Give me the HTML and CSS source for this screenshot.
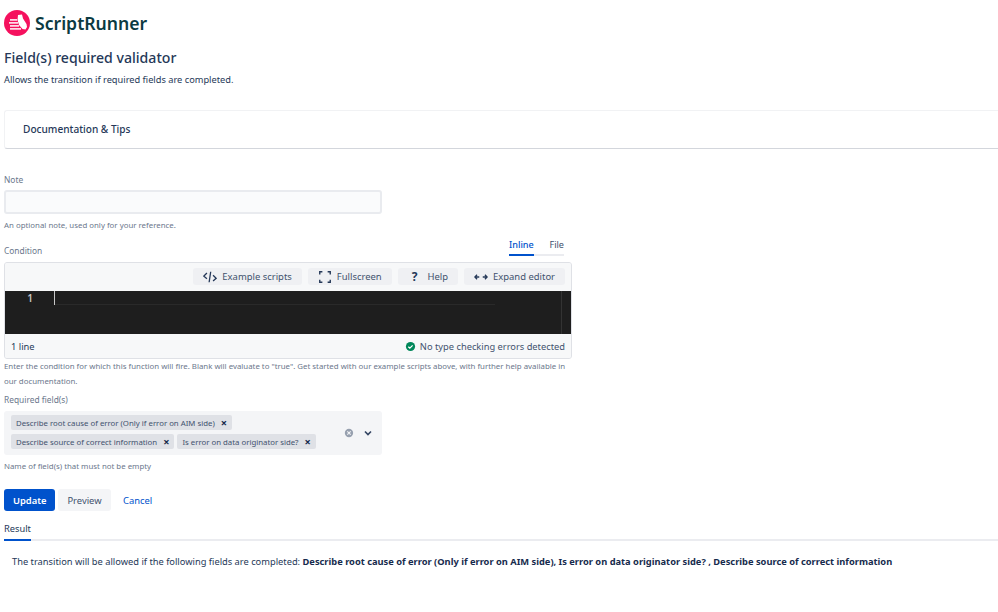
FILE: index.html
```html
<!DOCTYPE html>
<html lang="en">
<head>
<meta charset="utf-8">
<title>Field(s) required validator</title>
<link rel="stylesheet" href="styles.css">
</head>
<body>
<header class="brand">
  <svg class="brand-logo" viewBox="0 0 26 26" aria-hidden="true">
    <circle cx="13" cy="13" r="13" fill="#f5115e"/>
    <path d="M14 5l4-.5 1 4 3.500 5.500.5 3-1.500 2.500-3-.5-3.500-4-1.500-5z" fill="#fff"/>
    <path d="M6 9h7v1.800H6zM5 12h9v1.800H5zM6 15h9v1.800H6zM6 18h11v1.800H6z" fill="#fff" opacity=".85"/>
  </svg>
  <span class="brand-name">ScriptRunner</span>
</header>
<h1 class="title">Field(s) required validator</h1>
<p class="subtitle">Allows the transition if required fields are completed.</p>

<section class="doc-card">Documentation &amp; Tips</section>

<form class="form">
  <label class="label note-label">Note</label>
  <div class="note-input"></div>
  <p class="help note-help">An optional note, used only for your reference.</p>

  <div class="editor-block">
    <div class="condition-head">
      <label class="label">Condition</label>
      <div class="tabs">
        <span class="tab tab-active">Inline</span>
        <span class="tab">File</span>
      </div>
    </div>
    <div class="editor">
      <div class="toolbar">
        <button type="button" class="tool">
          <svg class="tool-icon" viewBox="0 0 16 16" aria-hidden="true"><path d="M4.500 3.500L1 7l3.500 3M8.800 2L7 14M11.500 6l3.500 3.500-3.500 3" fill="none" stroke="#253858" stroke-width="1.500"/></svg>
          Example scripts
        </button>
        <button type="button" class="tool">
          <svg class="tool-icon" viewBox="0 0 16 16" aria-hidden="true"><path d="M5 2H2v3M11 2h3v3M5 14H2v-3M11 14h3v-3" fill="none" stroke="#253858" stroke-width="1.600"/></svg>
          Fullscreen
        </button>
        <button type="button" class="tool tool-help">
          <span class="tool-q">?</span>
          Help
        </button>
        <button type="button" class="tool">
          <svg class="tool-icon" viewBox="0 0 16 16" aria-hidden="true"><path d="M6 8H1M3.500 5.500L1 8l2.500 2.500M10 8h5M12.500 5.500L15 8l-2.500 2.500" fill="none" stroke="#253858" stroke-width="1.500"/></svg>
          Expand editor
        </button>
      </div>
      <div class="code">
        <div class="gutter">1</div>
        <div class="code-area">
          <div class="code-line"><span class="caret"></span></div>
        </div>
        <div class="scroll-rail"></div>
      </div>
      <div class="status">
        <span class="status-lines">1 line</span>
        <span class="status-ok">
          <svg class="ok-icon" viewBox="0 0 12 12" aria-hidden="true"><circle cx="6" cy="6" r="5" fill="#00875a"/><path d="M3.600 6.200l1.700 1.500 3-3" fill="none" stroke="#fff" stroke-width="1.300"/></svg>
          No type checking errors detected
        </span>
      </div>
    </div>
    <p class="help cond-help">Enter the condition for which this function will fire. Blank will evaluate to "true". Get started with our example scripts above, with further help available in our documentation.</p>
  </div>

  <label class="label req-label">Required field(s)</label>
  <div class="select">
    <div class="chips">
      <span class="chip">Describe root cause of error (Only if error on AIM side)<i class="chip-x">×</i></span>
      <span class="chip">Describe source of correct information<i class="chip-x">×</i></span>
      <span class="chip">Is error on data originator side?<i class="chip-x">×</i></span>
    </div>
    <svg class="clear" viewBox="0 0 12 12" aria-hidden="true"><circle cx="6" cy="6" r="5" fill="#97a0af"/><path d="M4 4l4 4M8 4l-4 4" stroke="#f4f5f7" stroke-width="1.300"/></svg>
    <svg class="chevron" viewBox="0 0 10 10" aria-hidden="true"><path d="M2 3.500L5 6.500l3-3" fill="none" stroke="#344563" stroke-width="1.700"/></svg>
  </div>
  <p class="help req-help">Name of field(s) that must not be empty</p>

  <div class="actions">
    <button type="button" class="btn btn-primary">Update</button>
    <button type="button" class="btn btn-default">Preview</button>
    <button type="button" class="btn btn-link">Cancel</button>
  </div>
</form>

<div class="result-tabs"><span class="result-tab">Result</span></div>
<p class="result">The transition will be allowed if the following fields are completed: <b>Describe root cause of error (Only if error on AIM side), Is error on data originator side? , Describe source of correct information</b></p>
</body>
</html>
```
FILE: styles.css
```css
* { box-sizing: border-box; }
html, body { margin: 0; padding: 0; }
body {
  background: #fff;
  color: #172b4d;
  font-family: "Noto Sans", "Open Sans", sans-serif;
  font-size: 9.300px;
  height: 612px;
  overflow: hidden;
  padding-left: 4px;
}
.brand { display: flex; align-items: center; gap: 5px; height: 26px; margin-top: 10px; }
.brand-logo { width: 26px; height: 26px; flex: none; }
.brand-name { font-size: 17.600px; font-weight: 600; color: #0b3a42; }
.title { margin: 11px 0 0; font-size: 14.100px; font-weight: 500; line-height: 22px; color: #253858; }
.subtitle { margin: 3px 0 0; line-height: 16px; font-size: 9.250px; color: #253858; }
.doc-card {
  margin-top: 22px;
  height: 39px;
  padding: 0 0 1px 18px;
  display: flex;
  align-items: center;
  font-size: 10.100px;
  font-weight: 500;
  color: #253858;
  border: 1px solid #f1f2f4;
  border-right: 0;
  border-bottom: 1px solid #d3d6dc;
  border-radius: 3px 0 0 3px;
}
.form { display: flex; flex-direction: column; align-items: flex-start; }
.label { color: #6b778c; font-size: 8.400px; line-height: 12px; }
.note-label { margin-top: 25px; }
.note-input { margin-top: 4px; width: 378px; height: 24px; background: #fafbfc; border: 2px solid #e9ebef; border-radius: 3px; }
.help { margin: 0; color: #6b778c; font-size: 7.850px; line-height: 15px; }
.note-help { margin-top: 4px; }
.editor-block { width: 568px; }
.condition-head { display: flex; justify-content: space-between; align-items: flex-end; height: 23px; padding-right: 8px; }
.condition-head .label { margin-bottom: -1px; }
.tabs { display: flex; }
.tab { font-size: 9.100px; line-height: 15px; height: 19px; padding: 0 0 3px; color: #42526e; border-bottom: 2px solid #ebecf0; width: 30px; text-align: right; }
.tab-active { color: #0052cc; font-weight: 500; width: 25px; text-align: left; border-bottom-color: #0052cc; }
.editor { margin-top: 6px; height: 97px; border: 1px solid #dfe1e6; border-radius: 3px; background: #f4f5f7; display: flex; flex-direction: column; overflow: hidden; }
.toolbar { height: 28px; flex: none; background: #f7f8f9; display: flex; justify-content: flex-end; gap: 6px; align-items: center; padding: 0 6px 1px 0; }
.tool { height: 17px; border: 0; border-radius: 3px; background: #eff0f3; color: #42526e; font: inherit; font-size: 9.450px; display: flex; align-items: center; gap: 5px; padding: 0 10px; }
.tool-icon { width: 14px; height: 14px; }
.tool-help { padding: 0 10px 0 14px; gap: 10px; }
.tool-q { font-weight: 700; font-size: 12px; color: #253858; }
.code { height: 43px; flex: none; background: #1e1e1e; display: flex; position: relative; }
.gutter { width: 49px; text-align: right; padding-right: 21px; color: #c6c6c6; font-size: 10px; font-weight: 600; line-height: 14px; }
.code-area { flex: 1; }
.code-line { height: 14px; width: 441px; border-bottom: 1px solid #2a2a2a; }
.caret { display: block; width: 1px; height: 14px; background: #c8c8c8; }
.scroll-rail { width: 10px; border-left: 1px solid #333; margin-left: auto; }
.status { flex: 1; display: flex; justify-content: space-between; align-items: center; padding: 0 6px 0 6px; font-size: 9.300px; background: #f7f8f9; }
.status-lines { color: #253858; }
.status-ok { display: flex; align-items: center; gap: 4px; color: #42526e; }
.ok-icon { width: 11px; height: 11px; }
.cond-help { margin-top: 0; }
.req-label { margin-top: 5px; }
.select { margin-top: 5px; width: 378px; height: 44px; background: #f4f5f7; border-radius: 3px; display: flex; align-items: center; padding: 0 9px 0 7px; }
.chips { width: 327px; display: flex; flex-wrap: wrap; gap: 4px 3px; margin-bottom: 2px; }
.chip { display: flex; align-items: center; height: 15px; padding: 0 5px; background: #dfe1e6; color: #42526e; border-radius: 2px; font-size: 7.800px; white-space: nowrap; }
.chip-x { font-style: normal; font-weight: 700; margin-left: 6px; color: #172b4d; font-size: 11px; line-height: 15px; }
.clear { width: 10px; height: 10px; margin-left: 7px; }
.chevron { width: 10px; height: 10px; margin-left: 9px; }
.req-help { margin-top: 4px; }
.actions { display: flex; align-items: center; margin-top: 15px; gap: 3px; }
.btn { height: 22px; border: 0; border-radius: 3px; font: inherit; font-size: 9.400px; padding: 0 9px; }
.btn-primary { background: #0052cc; color: #fff; font-weight: 600; width: 51px; }
.btn-default { background: #f4f5f7; color: #42526e; width: 53px; }
.btn-link { background: none; color: #0052cc; }
.result-tabs { margin-top: 10px; height: 20px; border-bottom: 2px solid #ebecf0; }
.result-tab { display: inline-block; height: 20px; width: 27px; border-bottom: 2px solid #0052cc; font-size: 9.300px; color: #253858; line-height: 16px; white-space: nowrap; }
.result { margin: 13px 0 0 8px; font-size: 9.300px; line-height: 16px; color: #253858; white-space: nowrap; }
.result b { color: #172b4d; font-weight: 700; }
```
